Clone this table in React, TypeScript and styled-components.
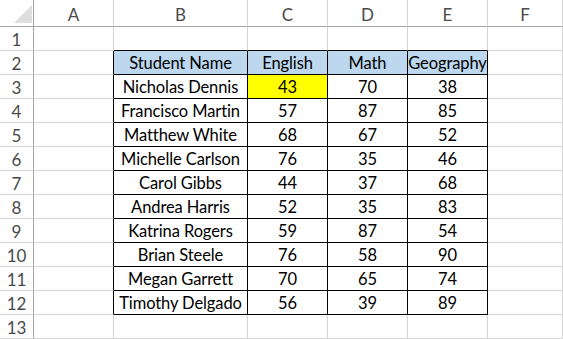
import React from "react";
import styled, { createGlobalStyle } from "styled-components";

const Global = createGlobalStyle`
  html, body { margin: 0; padding: 0; background: #ffffff; }
  body { font-family: "Lato", "Open Sans", sans-serif; }
`;

const GRID = "#d4d4d4";
const HEAD_LINE = "#a6a6a6";
const BLACK = "#000000";

const Sheet = styled.div`
  display: grid;
  grid-template-columns: 34px 80px 134px 80px 80px 80px 1fr;
  grid-template-rows: 27px repeat(13, 24px);
  width: 563px;
  height: 339px;
  overflow: hidden;
  font-family: "Lato", "Open Sans", sans-serif;
  font-size: 16.5px;
  color: #000;
`;

const Corner = styled.div`
  box-sizing: border-box;
  border-right: 1px solid ${HEAD_LINE};
  border-bottom: 1px solid ${HEAD_LINE};
  display: flex;
  align-items: flex-end;
  justify-content: flex-end;
  padding: 0 1px 3px 0;
`;

const ColHeader = styled.div`
  box-sizing: border-box;
  border-right: 1px solid ${GRID};
  border-bottom: 1px solid ${HEAD_LINE};
  display: flex;
  align-items: center;
  justify-content: center;
  padding-top: 2px;
  color: #4a4a4a;
  font-size: 17px;
`;

const RowHeader = styled.div`
  box-sizing: border-box;
  border-right: 1px solid ${HEAD_LINE};
  border-bottom: 1px solid ${GRID};
  display: flex;
  align-items: center;
  justify-content: center;
  padding-top: 1px;
  color: #4a4a4a;
  font-size: 17px;
`;

const Cell = styled.div<{ $fill?: string; $right?: boolean; $bottom?: boolean }>`
  box-sizing: border-box;
  border-right: 1px solid ${(p) => (p.$right ? BLACK : GRID)};
  border-bottom: 1px solid ${(p) => (p.$bottom ? BLACK : GRID)};
  background: ${(p) => p.$fill || "transparent"};
  display: flex;
  align-items: center;
  justify-content: center;
  padding-top: 1px;
  white-space: nowrap;
  overflow: visible;
  letter-spacing: -0.1px;
`;

const cols = ["A", "B", "C", "D", "E", "F"];

const data: [string, number, number, number][] = [
  ["Nicholas Dennis", 43, 70, 38],
  ["Francisco Martin", 57, 87, 85],
  ["Matthew White", 68, 67, 52],
  ["Michelle Carlson", 76, 35, 46],
  ["Carol Gibbs", 44, 37, 68],
  ["Andrea Harris", 52, 35, 83],
  ["Katrina Rogers", 59, 87, 54],
  ["Brian Steele", 76, 58, 90],
  ["Megan Garrett", 70, 65, 74],
  ["Timothy Delgado", 56, 39, 89],
];

const header = ["Student Name", "English", "Math", "Geography"];

function cellValue(r: number, c: number): string {
  if (c < 1 || c > 4) return "";
  if (r === 2) return header[c - 1];
  if (r >= 3 && r <= 12) {
    const row = data[r - 3];
    return String(row[c - 1]);
  }
  return "";
}

export default function App() {
  const cells: React.ReactNode[] = [];
  cells.push(
    <Corner key="corner">
      <svg width="18" height="18" viewBox="0 0 18 18">
        <polygon points="18,0 18,18 0,18" fill="#dedede" />
      </svg>
    </Corner>
  );
  cols.forEach((c) => cells.push(<ColHeader key={"h" + c}>{c}</ColHeader>));
  for (let r = 1; r <= 13; r++) {
    cells.push(<RowHeader key={"r" + r}>{r}</RowHeader>);
    for (let c = 0; c < 6; c++) {
      const inTable = r >= 2 && r <= 12 && c >= 1 && c <= 4;
      const right = inTable || (r >= 2 && r <= 12 && c === 0);
      const bottom = inTable || (r === 1 && c >= 1 && c <= 4);
      let fill: string | undefined;
      if (r === 2 && inTable) fill = "#bdd7ee";
      if (r === 3 && c === 2) fill = "#ffff00";
      cells.push(
        <Cell key={r + "-" + c} $right={right} $bottom={bottom} $fill={fill}>
          {cellValue(r, c)}
        </Cell>
      );
    }
  }
  return (
    <>
      <Global />
      <Sheet>{cells}</Sheet>
    </>
  );
}
